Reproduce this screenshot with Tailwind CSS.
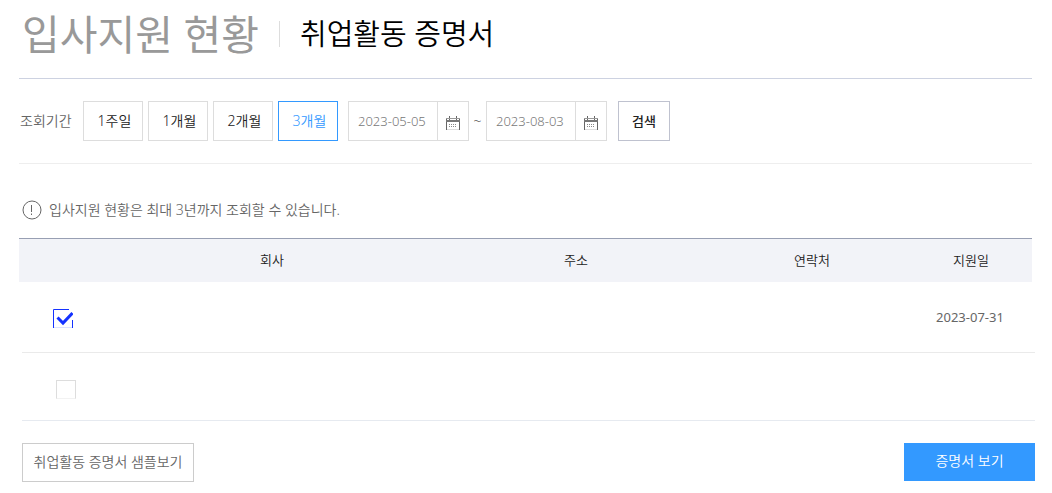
<!doctype html>
<html lang="ko">
<head>
    <meta charset="utf-8"/>
    <meta name="viewport" content="width=device-width, initial-scale=1"/>
    <title>취업활동 증명서</title>
    <script src="https://cdn.jsdelivr.net/npm/@tailwindcss/browser@4"></script>
</head>
<body class="bg-white pl-[19px] pr-[17px] font-['Noto_Sans','Noto_Sans_CJK_KR',sans-serif] text-sm text-[#666]">
<header class="mr-[3px] flex h-[79px] items-center border-b border-[#cdd2e1] pb-[10px] pl-[3px]">
    <h1 class="text-[41px] leading-[60px] text-[#999]">입사지원 현황</h1>
    <div class="ml-5 h-[26px] w-px bg-[#ddd]"></div>
    <h2 class="ml-5 text-[29px] leading-[60px] font-[350] text-black">취업활동 증명서</h2>
</header>
<main>
    <form class="mr-[3px] flex h-[85px] items-center border-b border-[#eee]">
        <span class="w-16 pl-px font-[350]">조회기간</span>
        <div class="flex gap-[5px] text-[#222]">
            <button type="button" class="h-10 w-[60px] border border-[#ddd] pl-[3px] font-[350]">1주일</button>
            <button type="button" class="h-10 w-[60px] border border-[#ddd] pl-[3px] font-[350]">1개월</button>
            <button type="button" class="h-10 w-[60px] border border-[#ddd] pl-[3px] font-[350]">2개월</button>
            <button type="button" class="h-10 w-[60px] border border-[#39f] pl-[3px] font-[350] text-[#39f]">3개월</button>
        </div>
        <div class="ml-[10px] flex h-10 w-[121px] border border-[#ddd]">
            <input type="text" value="2023-05-05" aria-label="시작일" class="w-full min-w-0 pl-[9px] text-[13px] font-light text-[#777] outline-none"/>
            <button type="button" aria-label="시작일 선택" class="flex w-[31px] shrink-0 items-center justify-center border-l border-[#ddd] pt-1">
                <svg class="h-4 w-4" viewBox="0 0 16 16" fill="none" stroke="#666">
                    <path d="M1.500 15V3M14.500 15V3M4.500 1v4M11.500 1v4"/>
                    <path d="M1 3.500h14" stroke="#999"/>
                    <path d="M1 6h14" stroke-width="2" stroke="#777"/>
                    <path d="M4 9.500h8M4 11.500h8" stroke="#888" stroke-dasharray="1 1"/>
                    <path d="M2 14.500h12" stroke="#ddd"/>
                </svg>
            </button>
        </div>
        <span class="w-[17px] text-center font-light text-[#444]">~</span>
        <div class="flex h-10 w-[121px] border border-[#ddd]">
            <input type="text" value="2023-08-03" aria-label="종료일" class="w-full min-w-0 pl-[9px] text-[13px] font-light text-[#777] outline-none"/>
            <button type="button" aria-label="종료일 선택" class="flex w-[31px] shrink-0 items-center justify-center border-l border-[#ddd] pt-1">
                <svg class="h-4 w-4" viewBox="0 0 16 16" fill="none" stroke="#666">
                    <path d="M1.500 15V3M14.500 15V3M4.500 1v4M11.500 1v4"/>
                    <path d="M1 3.500h14" stroke="#999"/>
                    <path d="M1 6h14" stroke-width="2" stroke="#777"/>
                    <path d="M4 9.500h8M4 11.500h8" stroke="#888" stroke-dasharray="1 1"/>
                    <path d="M2 14.500h12" stroke="#ddd"/>
                </svg>
            </button>
        </div>
        <button type="submit" class="ml-[11px] h-10 w-[52px] border border-[#bfc2cf] text-[13px] font-medium text-[#222]">검색</button>
    </form>

    <p class="flex h-[74px] items-center gap-[7px] pt-[18px] pl-[3px] font-[350]">
        <svg class="h-5 w-5" viewBox="0 0 20 20" fill="none" stroke="#666">
            <circle cx="10" cy="10" r="9"/>
            <path d="M9.500 5v7M9.500 13.500v1.500"/>
        </svg>
        입사지원 현황은 최대 3년까지 조회할 수 있습니다.
    </p>

    <table class="block text-[13px]">
        <thead class="mr-[3px] block border-t border-[#989fb3] bg-[#f2f3f8] text-[#222]">
        <tr class="grid h-[43px] grid-cols-[87fr_332fr_276fr_196fr_122fr] items-center">
            <th aria-label="선택"></th>
            <th class="font-[350]">회사</th>
            <th class="font-[350]">주소</th>
            <th class="font-[350]">연락처</th>
            <th class="font-[350]">지원일</th>
        </tr>
        </thead>
        <tbody class="ml-[3px] block">
        <tr class="grid h-[71px] grid-cols-[87fr_332fr_276fr_196fr_122fr] items-center border-b border-[#eaeaea]">
            <td class="pt-[3px] pl-[31px]">
                <label class="relative block h-5 w-5">
                    <input type="checkbox" checked aria-label="첫 번째 지원 선택" class="block h-5 w-5 appearance-none"/>
                    <svg class="pointer-events-none absolute inset-0 h-5 w-5" viewBox="0 0 20 20" fill="none" stroke="#1432ff">
                        <path d="M16 .5H.5V19M19.500 11v8"/>
                        <path d="M1 18.500h18" stroke="#dde2ff"/>
                        <path d="M4.500 8.500l5.500 5.500L19.500 4" stroke-width="3"/>
                    </svg>
                </label>
            </td>
            <td></td>
            <td></td>
            <td></td>
            <td class="pr-2 text-center">2023-07-31</td>
        </tr>
        <tr class="grid h-[68px] grid-cols-[87fr_332fr_276fr_196fr_122fr] items-center border-b border-[#e6eaf0]">
            <td class="pt-[6px] pl-[34px]">
                <input type="checkbox" aria-label="두 번째 지원 선택" class="block h-[19px] w-5 appearance-none border border-[#ddd] border-b-[#f2f2f2]"/>
            </td>
            <td></td>
            <td></td>
            <td></td>
            <td></td>
        </tr>
        </tbody>
    </table>

    <div class="ml-[3px] flex justify-between pt-[22px]">
        <button type="button" class="h-[39px] w-[172px] border border-[#ccc] pb-[2px] font-[350]">취업활동 증명서 샘플보기</button>
        <button type="button" class="h-[38px] w-[131px] bg-[#39f] pb-[2px] font-[350] text-white">증명서 보기</button>
    </div>
</main>
</body>
</html>
